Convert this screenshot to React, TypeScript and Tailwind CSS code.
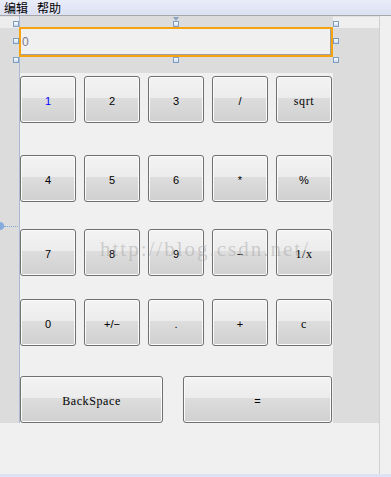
const btn =
  "flex items-center justify-center rounded-[3px] border border-[#707070] bg-[linear-gradient(to_bottom,#f3f3f3_0%,#ececec_47%,#dddddd_47%,#d0d0d0_100%)] shadow-[inset_0_0_0_1px_#fbfbfb] pt-[3px] h-[47px]";

const sans = "font-['Liberation_Sans',sans-serif] text-[11px] text-black";
const serif = "font-['Liberation_Serif',serif] text-[12px] tracking-[0.6px] text-black";

type Key = { label: string; serif?: boolean; blue?: boolean };

const rows: Key[][] = [
  [{ label: "1", blue: true }, { label: "2" }, { label: "3" }, { label: "/" }, { label: "sqrt", serif: true }],
  [{ label: "4" }, { label: "5" }, { label: "6" }, { label: "*" }, { label: "%" }],
  [{ label: "7" }, { label: "8" }, { label: "9" }, { label: "−" }, { label: "1/x", serif: true }],
  [{ label: "0" }, { label: "+/−" }, { label: "." }, { label: "+" }, { label: "c", serif: true }],
];

// gaps above each row, taken from the form layout
const rowGaps = ["mt-[3px]", "mt-[32px]", "mt-[27px]", "mt-[23px]"];

function Handle({ x, y }: { x: string; y: string }) {
  return (
    <div
      className={`absolute ${x} ${y} h-[6px] w-[6px] border border-[#7d9cc2] bg-[linear-gradient(to_bottom,#ffffff,#c9d9ee)]`}
    />
  );
}

export default function App() {
  return (
    <div className="relative flex h-[477px] w-[391px] flex-col overflow-hidden bg-[#f0f0f0]">
      {/* Menu bar */}
      <div className="flex h-[16px] items-start gap-[9px] border-b border-[#a6a6a6] bg-[linear-gradient(to_bottom,#eaedf9,#dbe0f2)] px-[4px] font-['Noto_Sans_CJK_SC',sans-serif] text-[12px] leading-[15px] text-black">
        <span>编辑</span>
        <span>帮助</span>
      </div>

      {/* Designer area */}
      <div className="flex flex-1">
        <div className="flex w-[380px] flex-col border-r border-[#d0d0d0]">
          <div className="flex h-[407px]">
            {/* Left column */}
            <div className="flex w-[19px] flex-col">
              <div className="h-[12px] border-t border-[#e2e2e2] bg-[#ededed]" />
              <div className="flex-1 bg-[#dcdcdc]" />
            </div>
            <div className="w-px bg-[#a9bbd2]" />

            {/* Form */}
            <div className="flex w-[313px] flex-col">
              <div className="h-[57px] bg-[#dcdcdc] pt-[11px]">
                <div className="-ml-px flex h-[30px] w-[314px] items-center border-2 border-[#f7a30f] bg-[#f0f0f0] pl-[1px] shadow-[inset_-1px_-1px_0_#a0a0a0] font-['Liberation_Sans',sans-serif] text-[12px] text-[#7a7a8a]">
                  0
                </div>
              </div>
              <div className="flex flex-1 flex-col bg-[#f0f0f0]">
                {rows.map((row, i) => (
                  <div key={i} className={`grid grid-cols-5 gap-x-[8px] ${rowGaps[i]} w-[312px]`}>
                    {row.map((k) => (
                      <div key={k.label} className={btn}>
                        <span className={k.serif ? serif : `${sans} ${k.blue ? "!text-[#0000ff]" : ""}`}>{k.label}</span>
                      </div>
                    ))}
                  </div>
                ))}
                <div className="mt-[30px] flex w-[312px] gap-[20px]">
                  <div className={`${btn} w-[143px]`}>
                    <span className={serif}>BackSpace</span>
                  </div>
                  <div className={`${btn} flex-1`}>
                    <span className={sans}>=</span>
                  </div>
                </div>
              </div>
            </div>

            {/* Right column */}
            <div className="flex flex-1 flex-col">
              <div className="h-[12px] border-t border-[#e2e2e2] bg-[#efefef]" />
              <div className="flex-1 bg-[#dcdcdc]" />
            </div>
          </div>
          <div className="flex-1" />
        </div>
        <div className="flex-1" />
      </div>
      <div className="h-[3px] bg-[#dde2f4]" />

      {/* Selection handles */}
      <div className="absolute left-[173px] top-[17px] h-0 w-0 border-x-[3px] border-t-[4px] border-x-transparent border-t-[#8aa4c4]" />
      <Handle x="left-[13px]" y="top-[21px]" />
      <Handle x="left-[13px]" y="top-[38px]" />
      <Handle x="left-[13px]" y="top-[57px]" />
      <Handle x="left-[173px]" y="top-[21px]" />
      <Handle x="left-[173px]" y="top-[57px]" />
      <Handle x="left-[333px]" y="top-[21px]" />
      <Handle x="left-[333px]" y="top-[38px]" />
      <Handle x="left-[333px]" y="top-[57px]" />

      {/* Layout marker on the left edge */}
      <div className="absolute left-[-4px] top-[222px] h-[8px] w-[8px] rounded-full bg-[#86abdc]" />
      <div className="absolute left-[4px] top-[226px] w-[14px] border-t border-dotted border-[#7fa6da]" />

      {/* Watermark */}
      <div className="pointer-events-none absolute left-[100px] top-[239px] font-['Liberation_Serif',serif] text-[21px] leading-none tracking-[2px] text-[#a0a0a0]/45">
        http://blog.csdn.net/
      </div>
    </div>
  );
}
